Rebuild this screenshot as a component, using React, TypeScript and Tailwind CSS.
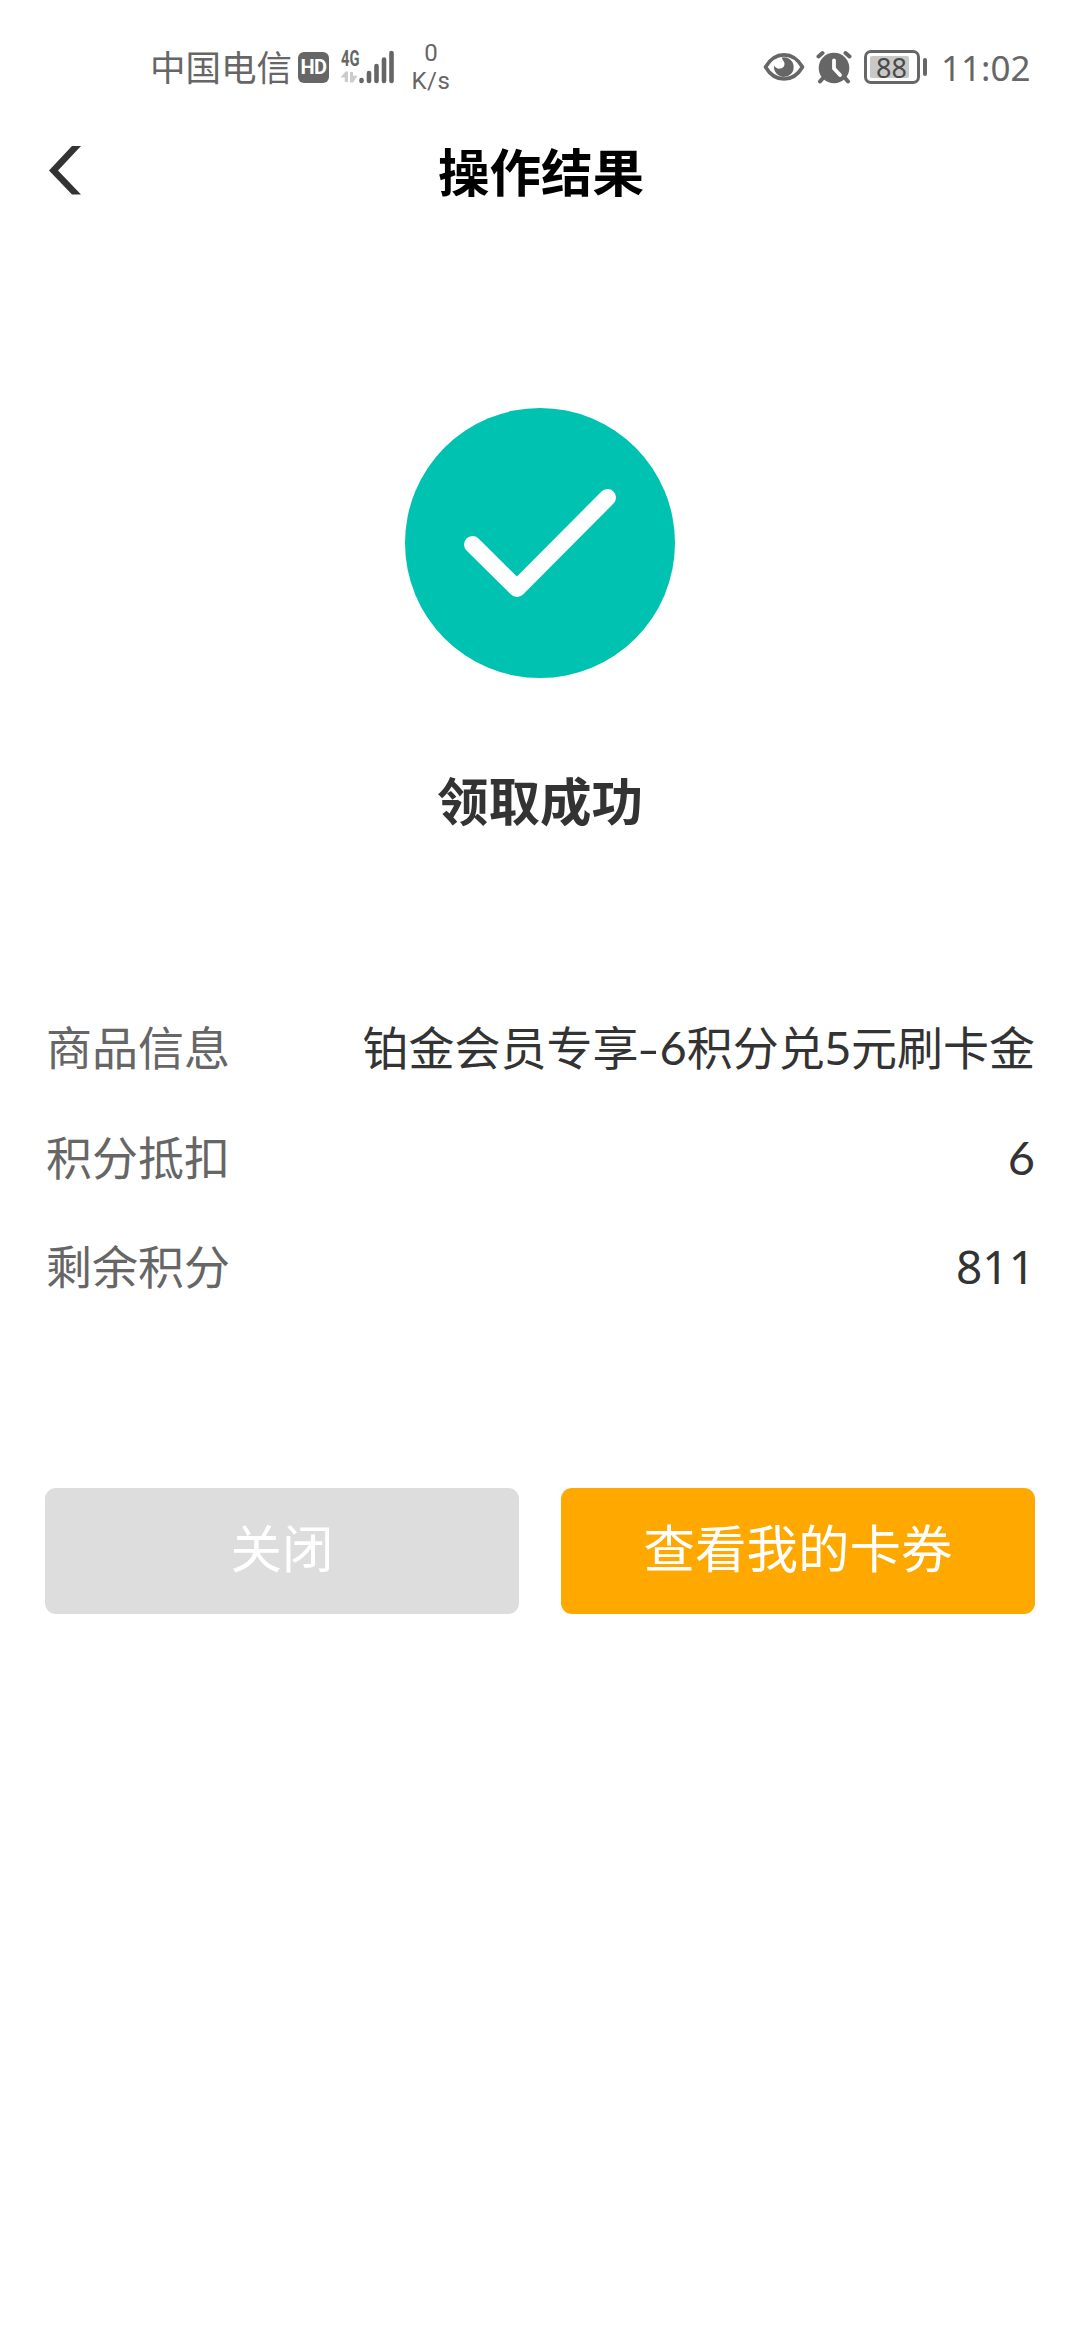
import React from 'react';

const StatusBar: React.FC = () => (
  <header className="h-[120px] pt-[40px] pl-[150px] pr-[50px] flex items-start justify-between text-[#666666]">
    <div className="flex items-center h-[54px]">
      <span className="text-[35.5px] leading-[54px] w-[148px] -mt-[3px] whitespace-nowrap">中国电信</span>
      <span className="w-[31px] h-[31px] rounded-[6px] bg-[#666666] text-white flex items-center justify-center font-['Roboto'] font-bold text-[20px] leading-none tracking-tight">
        HD
      </span>
      <svg className="ml-[11px] overflow-visible" width="56" height="36" viewBox="0 0 56 36" fill="#666666">
        <text x="1" y="16.500" fontSize="22" fontWeight="700" fontFamily="Roboto" textLength="18.500" lengthAdjust="spacingAndGlyphs">4G</text>
        <g fill="#cccccc">
          <path d="M0.500 28.500L5.500 22.500H8V33H4.800V28.500Z" />
          <path d="M10 23H13V26.800H17.500L13 33.500H10Z" />
        </g>
        <g stroke="#666666" strokeWidth="4.6" strokeLinecap="round">
          <path d="M21.500 31v1M29 24v8M36.500 17v15M44 10.500v21.500M51.500 4v28" />
        </g>
      </svg>
      <div className="ml-[15px] w-[40px] flex flex-col items-center font-['Roboto'] text-[24px] leading-[28px]">
        <span>0</span>
        <span className="tracking-wide">K/s</span>
      </div>
    </div>

    <div className="flex items-center h-[54px]">
      <svg width="42" height="30" viewBox="0 0 42 30">
        <path d="M2.500 15C12 -1.200 30 -1.200 39.500 15C30 31 12 31 2.500 15Z" fill="none" stroke="#666666" strokeWidth="3.6" strokeLinejoin="round" />
        <path d="M19 5.500A9.800 9.800 0 1 1 11.200 13.500C12.500 17.500 21 18.500 21.500 12C21.700 9 19 8.500 19 5.500Z" fill="#666666" />
      </svg>
      <svg className="ml-[11px]" width="36" height="34" viewBox="0 0 36 34">
        <circle cx="18" cy="18" r="15.300" fill="#666666" />
        <g stroke="#666666" strokeWidth="4" strokeLinecap="round">
          <path d="M2.500 6.500L6.500 3M33.500 6.500L29.500 3M7 28l-3 3.500M29 28l3 3.500" />
        </g>
        <path d="M18 10.500v8l6 6.500" fill="none" stroke="#fff" strokeWidth="3.800" strokeLinecap="round" strokeLinejoin="round" />
      </svg>
      <div className="ml-[12px] w-[56px] h-[34px] rounded-[7px] border-[3px] border-[#666666] p-[3px]">
        <div className="w-[39px] h-[22px] rounded-[2px] bg-[#c8c8c8] text-[#4a4a4a] pl-[4px] flex items-center justify-center font-['Noto_Sans'] text-[27px] leading-none">
          88
        </div>
      </div>
      <div className="ml-[3px] w-[4px] h-[18px] rounded-full bg-[#666666]" />
      <span className="ml-[14px] w-[89px] font-['Noto_Sans'] text-[35px] leading-[54px] mt-px whitespace-nowrap">11:02</span>
    </div>
  </header>
);

const details = [
  { label: '商品信息', value: <>铂金会员专享<span className="inline-block w-[21px] text-center scale-x-[1.3]">-</span><Six />积分兑<span className="font-['Noto_Sans']">5</span>元刷卡金</> },
  { label: '积分抵扣', value: <Six /> },
  { label: '剩余积分', value: <span className="font-['Noto_Sans'] text-[46px]">811</span> },
];

function Six() {
  return <span className="font-['Lato'] text-[47px]">6</span>;
}

export default function App() {
  return (
    <div className="w-[1080px] h-[2340px] bg-white overflow-hidden font-['Noto_Sans_CJK_SC',sans-serif]">
      <StatusBar />

      <nav className="h-[100px] pl-[48px] pr-[46px] grid grid-cols-[1fr_auto_1fr] items-center">
        <svg width="34" height="50" viewBox="0 0 34 50" fill="#333333">
          <path d="M24 1h9L10 25.500L33 49.500h-9L1 25.500Z" />
        </svg>
        <h1 className="text-[51.5px] leading-[100px] font-bold text-black">操作结果</h1>
      </nav>

      <main className="pt-[188px]">
        <svg className="mx-auto" width="270" height="270" viewBox="0 0 270 270">
          <circle cx="135" cy="135" r="135" fill="#00c2b0" />
          <path d="M67.500 136.500L112 180.500L202.500 89.500" fill="none" stroke="#fff" strokeWidth="17" strokeLinecap="round" strokeLinejoin="round" />
        </svg>
        <h2 className="mt-[81px] text-center text-[51.5px] leading-[80px] font-bold text-[#333333]">领取成功</h2>

        <dl className="mt-[152px] pl-[46px] pr-[45px] text-[46px]">
          {details.map((row) => (
            <div key={row.label} className="h-[109.5px] flex justify-between leading-[109px] whitespace-nowrap">
              <dt className="text-[#666666]">{row.label}</dt>
              <dd className="text-[#333333]">{row.value}</dd>
            </div>
          ))}
        </dl>

        <div className="mt-[168.5px] px-[45px] flex gap-[42px] text-[51.5px] leading-[112px] text-white">
          <button className="flex-1 h-[126px] pb-[10px] rounded-[11px] bg-[#dddddd]">关闭</button>
          <button className="flex-1 h-[126px] pb-[10px] rounded-[11px] bg-[#ffa800]">查看我的卡券</button>
        </div>
      </main>
    </div>
  );
}
